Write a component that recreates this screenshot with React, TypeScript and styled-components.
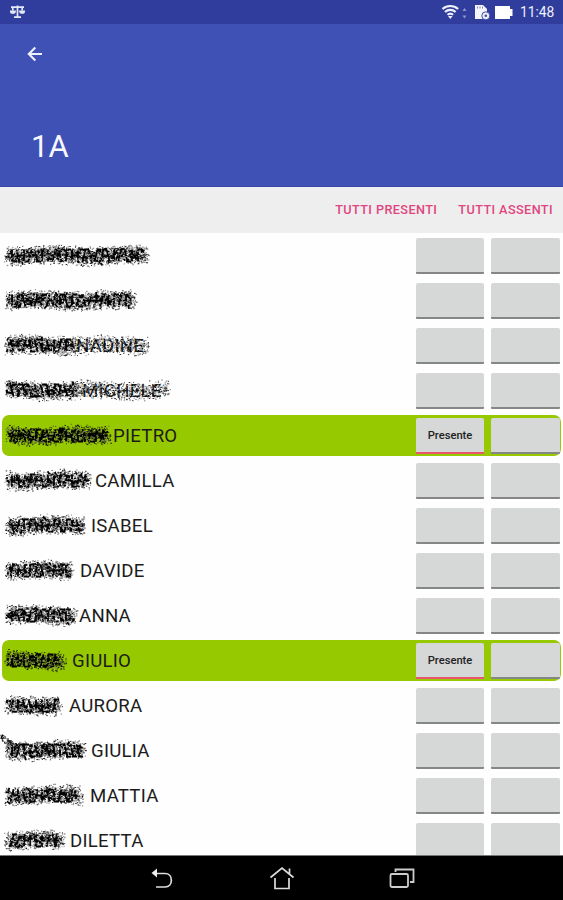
import React from 'react';
import styled, { createGlobalStyle } from 'styled-components';

const GlobalStyle = createGlobalStyle`
  * { box-sizing: border-box; }
  body { margin: 0; background: #fff; font-family: Roboto, "Liberation Sans", sans-serif; }
`;

const Screen = styled.div`
  display: flex;
  flex-direction: column;
  width: 563px;
  height: 900px;
  overflow: hidden;
  background: #fefefe;
`;

const StatusBar = styled.div`
  display: flex;
  align-items: center;
  flex: 0 0 24px;
  padding: 0 8px 0 9px;
  background: #303d9d;
  color: #eef0fb;
`;

const StatusIcons = styled.div`
  display: flex;
  align-items: center;
  margin-left: auto;
`;

const CardSlot = styled.span`
  display: flex;
  margin: 0 3px 0 6px;
`;

const Clock = styled.span`
  width: 35px;
  margin-left: 7px;
  font-size: 13.8px;
  line-height: 24px;
  white-space: nowrap;
`;

const AppBar = styled.header`
  display: flex;
  flex-direction: column;
  justify-content: space-between;
  flex: 0 0 163px;
  padding: 20px 26px 20px;
  background: #3f51b5;
  border-bottom: 1px solid #3547ac;
`;

const ClassTitle = styled.h1`
  margin: 0 0 0 5px;
  color: #f7f8ff;
  font-size: 31px;
  font-weight: 400;
  line-height: 38px;
`;

const BackButton = styled.button`
  width: 20px;
  height: 20px;
  padding: 0;
  border: 0;
  background: none;
`;

const Actions = styled.div`
  display: flex;
  justify-content: flex-end;
  align-items: center;
  gap: 21px;
  flex: 0 0 46px;
  padding: 0 10px 0 0;
  background: #eee;
`;

const TextButton = styled.button`
  padding: 0;
  border: 0;
  background: none;
  color: #e0457f;
  font: 500 12.7px/20px Roboto, sans-serif;
  letter-spacing: 0.4px;
  white-space: nowrap;
`;

const List = styled.div`
  flex: 1 1 0;
  min-height: 0;
  overflow: hidden;
`;

const Row = styled.div<{ $present?: boolean }>`
  position: relative;
  display: flex;
  align-items: center;
  height: 41px;
  margin: 2px 2px 4px;
  padding-right: 1px;
  border-radius: 7px;
  background: ${(p) => (p.$present ? '#97c900' : 'transparent')};
`;

const Name = styled.span<{ $x: number }>`
  margin-left: ${(p) => p.$x - 2}px;
  color: #1c1c1c;
  font-size: 18.6px;
  letter-spacing: 0.25px;
  line-height: 24px;
  white-space: nowrap;
`;

const ScribbleLayer = styled.svg`
  position: absolute;
  left: -2px;
  top: 0;
`;

const Toggles = styled.div`
  display: flex;
  gap: 7px;
  margin-left: auto;
`;

const Toggle = styled.button<{ $on?: boolean; $width: number }>`
  width: ${(p) => p.$width}px;
  height: 36px;
  padding: 3px 0 0;
  border: 0;
  border-bottom: 2px solid ${(p) => (p.$on ? '#e8566c' : '#858686')};
  border-radius: 2px 2px 1px 1px;
  background: #d6d7d7;
  color: #222;
  font: 500 11.2px/16px Roboto, sans-serif;
`;

const NavBar = styled.nav`
  display: flex;
  justify-content: center;
  align-items: center;
  gap: 94px;
  flex: 0 0 45px;
  border-top: 1px solid #777;
  background: #000;
`;

const NavButton = styled.button`
  width: 26px;
  height: 26px;
  padding: 0;
  border: 0;
  background: none;
`;

type Student = { name: string; x: number; end: number; present?: boolean; fade?: number };

const students: Student[] = [
  { name: '', x: 5, end: 147 },
  { name: '', x: 5, end: 134 },
  { name: 'NADINE', x: 76, end: 148, fade: 76 },
  { name: 'MICHELE', x: 82, end: 168, fade: 78 },
  { name: 'PIETRO', x: 113, end: 109, present: true },
  { name: 'CAMILLA', x: 95, end: 89 },
  { name: 'ISABEL', x: 91, end: 84 },
  { name: 'DAVIDE', x: 80, end: 72 },
  { name: 'ANNA', x: 79, end: 75 },
  { name: 'GIULIO', x: 72, end: 64, present: true },
  { name: 'AURORA', x: 69, end: 60 },
  { name: 'GIULIA', x: 91, end: 84 },
  { name: 'MATTIA', x: 90, end: 81 },
  { name: 'DILETTA', x: 70, end: 63 },
];

function randomSource(seed: number) {
  let s = seed * 7919 + 17;
  return () => {
    s = (Math.imul(s, 1664525) + 1013904223) >>> 0;
    return s / 4294967296;
  };
}

/* Spray-can marks covering the private part of a name. */
function Scribble({ seed, student }: { seed: number; student: Student }) {
  const rnd = randomSource(seed);
  const { end } = student;
  const fade = student.fade ?? end;
  let haze = '';
  let spray = '';
  let strokes = '';
  let holes = '';
  for (let x = 7; x < end; x += 1) {
    const light = x > fade;
    const centre = 20.5 + Math.sin(x / 13 + seed) * 1.2;
    for (let i = 0; i < (light ? 7 : 13); i += 1) {
      const y = centre + (rnd() + rnd() - 1) * 10.5;
      const px = x + (rnd() - 0.5) * 6;
      const dot = `M${px.toFixed(1)} ${y.toFixed(1)}h${(0.8 + rnd() * 0.8).toFixed(1)}`;
      if (i % 2) haze += dot;
      else spray += dot;
    }
    if (!light && x < end - 2 && rnd() < 0.62) {
      const y = centre + (rnd() - 0.5) * 11;
      strokes += `M${x} ${y.toFixed(1)}l${((rnd() - 0.5) * 7).toFixed(1)} ${((rnd() - 0.5) * 8).toFixed(1)}`;
    }
    if (x % 6 === 0 && x < Math.min(end, fade) - 4) {
      const lean = Math.floor(rnd() * 3) * 3 - 3;
      const level = [14.5, 20.5, 26.500][Math.floor(rnd() * 3)];
      strokes += `M${x - lean / 2} 14.500l${lean} 12M${x} ${level}h5`;
    }
    if (rnd() < 0.9) {
      const y = centre + (rnd() - 0.5) * 13;
      holes += `M${x} ${y.toFixed(1)}l${(1 + rnd() * 2).toFixed(1)} ${(rnd() * 2 - 1).toFixed(1)}`;
    }
  }
  if (seed === 12) {
    for (let i = 0; i < 110; i += 1) {
      const t = rnd() * 17;
      spray += `M${t.toFixed(1)} ${(7 + t * 0.65 + (rnd() - 0.5) * 7).toFixed(1)}h1`;
    }
  }
  return (
    <ScribbleLayer width="190" height="41" fill="none">
      <path d={haze} stroke="#333" strokeWidth="1.3" opacity="0.5" />
      <path d={strokes} stroke="#050505" strokeWidth="1.8" />
      <path d={spray} stroke="#000" strokeWidth="1" opacity="0.8" />
      <path d={holes} stroke={student.present ? '#96a472' : '#c4c4c4'} strokeWidth="1" opacity="0.8" />
    </ScribbleLayer>
  );
}

const ScalesIcon = () => (
  <svg width="17" height="16" viewBox="0 0 17 16" fill="none" stroke="#e5e9f5" strokeWidth="1.7">
    <path d="M2 3.200h13M8.500 1.500v11M5 13.200h7M3.800 3.500v3M13.200 3.500v3" />
    <path d="M1.500 7h4.800c0 3-4.800 3-4.800 0zM10.700 7h4.800c0 3-4.800 3-4.800 0z" fill="#e5e9f5" strokeWidth="1.200" />
  </svg>
);

const WifiIcon = () => (
  <svg width="27" height="20" viewBox="0 0 27 20" fill="none" stroke="#eff1fa" strokeWidth="2.200">
    <path d="M1.500 7c4.400-4 11.200-4 15.600 0M4 10c3-2.800 7.600-2.800 10.600 0M6.500 12.800c1.700-1.500 3.900-1.500 5.600 0" />
    <path d="M7 14l2.300 3 2.300-3z" fill="#eff1fa" stroke="none" />
    <path d="M21.500 9l2-3 2 3zM21.500 13.500l2 3 2-3z" fill="#8c95cd" stroke="none" />
  </svg>
);

const CardIcon = () => (
  <svg width="17" height="18" viewBox="0 0 17 18">
    <path d="M1 2h8l4 4v10H1z" fill="#f4f5fb" />
    <path d="M3.500 3.500v2M6 3.500v2M8.500 3.500v2" stroke="#7a83bd" />
    <circle cx="11.800" cy="12.800" r="4" fill="#eceef8" stroke="#414da7" strokeWidth="1" />
    <circle cx="11.800" cy="12.800" r="1.300" fill="#414da7" />
  </svg>
);

const BatteryIcon = () => (
  <svg width="19" height="13" viewBox="0 0 19 13">
    <path d="M1 0h15v3h2.500v7H16v3H1z" fill="#fff" />
  </svg>
);

export default function App() {
  return (
    <>
      <GlobalStyle />
      <Screen>
        <StatusBar>
          <ScalesIcon />
          <StatusIcons>
            <WifiIcon />
            <CardSlot>
              <CardIcon />
            </CardSlot>
            <BatteryIcon />
            <Clock>11:48</Clock>
          </StatusIcons>
        </StatusBar>
        <AppBar>
          <BackButton aria-label="Indietro">
            <svg width="20" height="20" fill="none" stroke="#edf1ff" strokeWidth="2.100">
              <path d="M16 10H3M9.300 3.500L2.800 10l6.500 6.500" />
            </svg>
          </BackButton>
          <ClassTitle>1A</ClassTitle>
        </AppBar>
        <Actions>
          <TextButton>TUTTI PRESENTI</TextButton>
          <TextButton>TUTTI ASSENTI</TextButton>
        </Actions>
        <List>
          {students.map((student, i) => (
            <Row key={i} $present={student.present}>
              <Name $x={student.x}>{student.name}</Name>
              <Scribble seed={i + 1} student={student} />
              <Toggles>
                <Toggle $width={68} $on={student.present}>{student.present ? 'Presente' : ''}</Toggle>
                <Toggle $width={69} />
              </Toggles>
            </Row>
          ))}
        </List>
        <NavBar>
          <NavButton aria-label="Back">
            <svg width="26" height="26" fill="none" stroke="#ddd" strokeWidth="1.700">
              <path d="M5 8.500h11c8.500 0 8.500 13.500 0 13.500H7" />
              <path d="M8 3.500v9L2.500 8z" fill="#eee" stroke="none" />
            </svg>
          </NavButton>
          <NavButton aria-label="Home">
            <svg width="26" height="26" fill="none" stroke="#ddd" strokeWidth="1.700">
              <path d="M1.500 12.500L13 3l11.500 9.500M20.500 9V3.500M6 13v10.500h14V13" />
            </svg>
          </NavButton>
          <NavButton aria-label="Recents">
            <svg width="26" height="26" fill="none" stroke="#ccc" strokeWidth="1.800">
              <rect x="1.500" y="9" width="17.500" height="13" rx="1.500" />
              <path d="M6.500 7V4.500h18V17H21" />
            </svg>
          </NavButton>
        </NavBar>
      </Screen>
    </>
  );
}
